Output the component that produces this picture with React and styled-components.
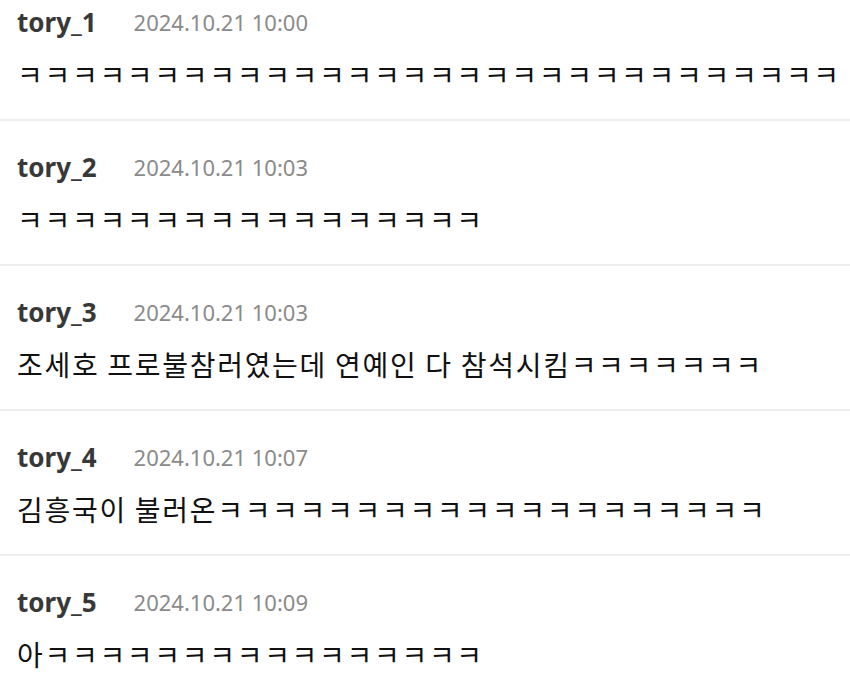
import React from 'react';
import styled, { createGlobalStyle } from 'styled-components';

const GlobalStyle = createGlobalStyle`
	html, body {
		margin: 0;
		padding: 0;
		background: #ffffff;
	}
	body {
		font-family: "Noto Sans", "Noto Sans CJK KR", sans-serif;
		overflow: hidden;
	}
`;

const CommentList = styled.ul`
	list-style: none;
	margin: 0;
	padding: 0;
	width: 850px;
`;

const CommentItem = styled.li`
	display: flex;
	flex-direction: column;
	gap: 16px;
	padding: 30px 17px 25px;
	border-bottom: 2px solid #eeeeee;

	&:first-child {
		padding-top: 6px;
	}
`;

const CommentHeader = styled.div`
	display: flex;
	align-items: center;
	gap: 37px;
	height: 32px;
`;

const Author = styled.span`
	font-size: 26px;
	font-weight: 700;
	color: #383838;
`;

const Timestamp = styled.span`
	font-size: 22px;
	color: #8a8a8a;
`;

const Body = styled.p`
	margin: 0;
	height: 40px;
	line-height: 40px;
	font-family: "Noto Sans CJK KR", sans-serif;
	font-size: 28px;
	letter-spacing: 1.7px;
	color: #111111;
	white-space: nowrap;
`;

const comments = [
	{ id: 1, author: 'tory_1', time: '2024.10.21 10:00', text: 'ㅋ'.repeat(30) },
	{ id: 2, author: 'tory_2', time: '2024.10.21 10:03', text: 'ㅋ'.repeat(17) },
	{ id: 3, author: 'tory_3', time: '2024.10.21 10:03', text: '조세호 프로불참러였는데 연예인 다 참석시킴' + 'ㅋ'.repeat(7) },
	{ id: 4, author: 'tory_4', time: '2024.10.21 10:07', text: '김흥국이 불러온' + 'ㅋ'.repeat(20) },
	{ id: 5, author: 'tory_5', time: '2024.10.21 10:09', text: '아' + 'ㅋ'.repeat(16) },
];

const App = () => {
	return (
		<>
			<GlobalStyle />
			<CommentList>
				{comments.map(c => (
					<CommentItem key={c.id}>
						<CommentHeader>
							<Author>{c.author}</Author>
							<Timestamp>{c.time}</Timestamp>
						</CommentHeader>
						<Body>{c.text}</Body>
					</CommentItem>
				))}
			</CommentList>
		</>
	);
};

export default App;
